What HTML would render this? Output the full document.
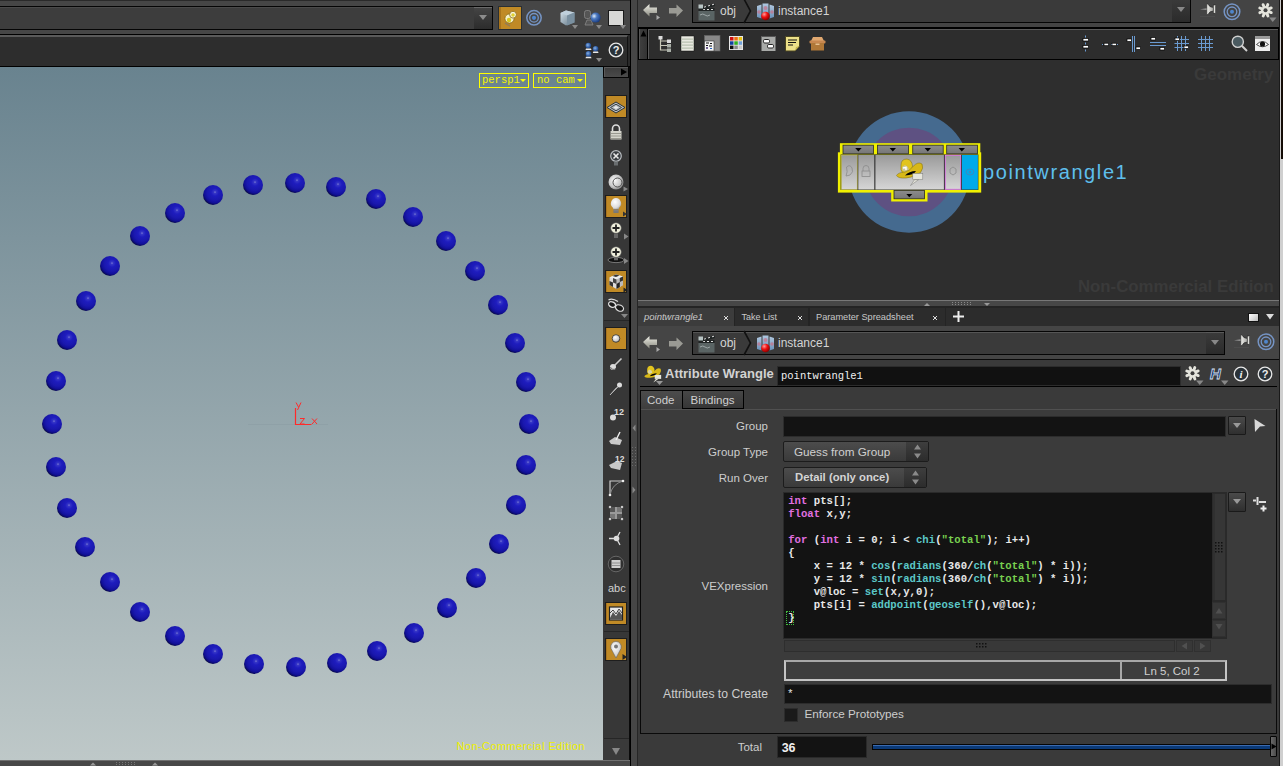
<!DOCTYPE html>
<html><head><meta charset="utf-8">
<style>
*{margin:0;padding:0;box-sizing:border-box}
body{-webkit-font-smoothing:antialiased}
html,body{width:1283px;height:766px;overflow:hidden;background:#3a3a3a;font-family:"Liberation Sans",sans-serif;color:#cfcfcf}
.a{position:absolute}
svg{position:absolute;overflow:visible}
.sp{position:absolute;width:20px;height:20px;border-radius:50%;background:radial-gradient(circle at 60% 36%,#7676d4 0,#3434c6 8%,#1e1cbe 22%,#1a18ae 45%,#12109a 60%,#0a0a66 71%,#030318 79%)}
.mono{font-family:"Liberation Mono",monospace}
.t{position:absolute;white-space:pre;line-height:1}
.tri{position:absolute;width:0;height:0;border-left:3.5px solid transparent;border-right:3.5px solid transparent;border-top:4px solid #8a8a8a}
.ob{position:absolute;left:605px;width:22px;height:23px;background:#c08a26;border:1px solid #1e1e1e;box-shadow:inset 1px 0 0 #a87420}
.lbl{position:absolute;white-space:pre;line-height:1;font-size:11.5px;color:#cdcdcd;text-align:right}
</style></head><body>
<!-- LEFT TOP TOOLBAR -->
<div class="a" style="left:0;top:0;width:630px;height:34px;background:#464646;border-top:1px solid #2a2a2a"></div>
<div class="a" style="left:0;top:6px;width:493px;height:24px;background:#3d3d3d;border:1px solid #050505;border-left:none;box-shadow:inset 0 1px 0 #4a4a4a"></div>
<div class="a" style="left:474px;top:7px;width:18px;height:22px;background:linear-gradient(#444,#2c2c2c);border-top:1px solid #6a6a6a"></div>
<div class="tri" style="left:479px;top:15px;border-left-width:4px;border-right-width:4px;border-top-width:5px;border-top-color:#8c8c8c"></div>
<div class="a" style="left:498px;top:6px;width:24px;height:24px;background:#c08a26;border:1px solid #2a2f33;box-shadow:inset 2px 0 0 #a8741c"></div>
<svg style="left:499px;top:7px" width="22" height="22" viewBox="0 0 22 22">
 <path d="M6 16 L11 19" stroke="#8a7a60" stroke-width="1.5" opacity=".8"/>
 <circle cx="10.5" cy="11.5" r="4.6" fill="#f4f0c8" stroke="#8a6a10" stroke-width=".8"/>
 <circle cx="10" cy="13" r="2.2" fill="#d8c820"/>
 <circle cx="14" cy="7.7" r="3.4" fill="#f8f6e0" stroke="#8a6a10" stroke-width=".8"/>
 <circle cx="14" cy="8" r="1.8" fill="#e0d030"/>
</svg>
<svg style="left:526px;top:10px" width="16" height="16" viewBox="0 0 16 16">
 <circle cx="8" cy="7.8" r="7.2" fill="none" stroke="#7594c4" stroke-width="1.5"/>
 <circle cx="8" cy="7.8" r="4.3" fill="none" stroke="#7594c4" stroke-width="1.3"/>
 <circle cx="8" cy="7.8" r="2.1" fill="#4f86cc"/>
</svg>
<svg style="left:560px;top:10px" width="16" height="16" viewBox="0 0 16 16">
 <defs><linearGradient id="cg" x1="0" y1="0" x2="1" y2="1"><stop offset="0" stop-color="#d8e4ec"/><stop offset="1" stop-color="#5a7080"/></linearGradient></defs>
 <path d="M0.5 3 L6 0.5 L14.5 2.5 L14.5 12.5 L6 15.5 L0.5 12 Z" fill="url(#cg)"/>
 <path d="M0.5 3 L6 0.5 L14.5 2.5 L7 5.5 Z" fill="#c0d0dc"/>
 <path d="M7 5.5 L14.5 2.5 L14.5 12.5 L7 15.5 Z" fill="#7a90a0"/>
</svg>
<div class="tri" style="left:572px;top:25px"></div>
<svg style="left:584px;top:10px" width="18" height="16" viewBox="0 0 18 16">
 <rect x="0.5" y="0.5" width="6" height="8" rx="2" fill="#555" stroke="#888" stroke-width=".8"/>
 <path d="M1 15 L3 10 L7 10 L9 15 Z" fill="#555" stroke="#888" stroke-width=".8"/>
 <defs><radialGradient id="bg1" cx=".35" cy=".35" r=".7"><stop offset="0" stop-color="#e0ecf8"/><stop offset=".4" stop-color="#4d7ac0"/><stop offset="1" stop-color="#173a80"/></radialGradient></defs>
 <circle cx="11.6" cy="7.6" r="5" fill="url(#bg1)"/>
</svg>
<div class="tri" style="left:596px;top:25px"></div>
<div class="a" style="left:608px;top:10px;width:16px;height:16px;background:#d8d8d6;border:1px solid #1a1a1a"></div>
<div class="tri" style="left:620px;top:25px"></div>
<div class="a" style="left:0;top:34px;width:630px;height:1px;background:#000"></div>
<!-- second bar -->
<div class="a" style="left:0;top:35px;width:630px;height:32px;background:#2a2a2a"></div><div class="a" style="left:0;top:35px;width:628px;height:31px;background:#2d2d2d;border-top:2px solid #5a5a5a;border-right:1px solid #111"></div>
<div class="a" style="left:0;top:66px;width:630px;height:1px;background:#000"></div>
<svg style="left:584px;top:42px" width="18" height="18" viewBox="0 0 18 18">
 <defs><radialGradient id="bb" cx=".4" cy=".4" r=".7"><stop offset="0" stop-color="#8ab0e0"/><stop offset=".6" stop-color="#2f5ea8"/><stop offset="1" stop-color="#173870"/></radialGradient></defs>
 <circle cx="4.3" cy="3.6" r="2.8" fill="url(#bb)"/><path d="M2 6.5 H7 L7.5 8 H1.5Z" fill="#e8e8e8"/>
 <circle cx="11.6" cy="6.7" r="2.8" fill="url(#bb)"/><path d="M9.3 9.6 H14 L14.5 11 H8.8Z" fill="#e8e8e8"/>
 <circle cx="4.5" cy="11.9" r="2.8" fill="url(#bb)"/><path d="M2 14.8 H7 L7.5 16.2 H1.5Z" fill="#e8e8e8"/>
</svg>
<div class="tri" style="left:596px;top:58px"></div>
<svg style="left:608px;top:42px" width="16" height="16" viewBox="0 0 16 16">
 <circle cx="8" cy="8" r="6.8" fill="#2a3238" stroke="#e8e8e8" stroke-width="1.3"/>
 <text x="8" y="12" font-family="Liberation Sans" font-weight="bold" font-size="11" fill="#eee" text-anchor="middle">?</text>
</svg>
<!-- VIEWPORT -->
<div class="a" id="vp" style="left:0;top:67px;width:603px;height:693px;background:linear-gradient(#69838f,#bec8c8);overflow:hidden">
<div class="a" style="left:248px;top:357px;width:80px;height:1px;background:#7f9096;opacity:.25"></div>
<svg style="left:290px;top:330px" width="40" height="30" viewBox="0 0 40 30">
 <path d="M5.5 11 V27.5 H21.5" fill="none" stroke="#ff2a2a" stroke-width="1.2"/>
 <path d="M6 5.5 L8.5 10 M11 5.5 L7.5 13" stroke="#ff2a2a" stroke-width="1" fill="none"/>
 <path d="M10 21.5 H14.5 L10 27 H14.5" stroke="#ff2a2a" stroke-width="1" fill="none"/>
 <path d="M22 21.5 L27 27 M27 21.5 L22 27" stroke="#ff2a2a" stroke-width="1" fill="none"/>
</svg>
<i class="sp" style="left:284.8px;top:105.7px"></i>
<i class="sp" style="left:325.8px;top:109.7px"></i>
<i class="sp" style="left:365.5px;top:121.5px"></i>
<i class="sp" style="left:402.6px;top:139.7px"></i>
<i class="sp" style="left:436.2px;top:163.9px"></i>
<i class="sp" style="left:464.6px;top:193.5px"></i>
<i class="sp" style="left:488.0px;top:227.8px"></i>
<i class="sp" style="left:505.0px;top:265.6px"></i>
<i class="sp" style="left:515.7px;top:305.4px"></i>
<i class="sp" style="left:519.3px;top:346.8px"></i>
<i class="sp" style="left:516.1px;top:388.3px"></i>
<i class="sp" style="left:505.9px;top:428.4px"></i>
<i class="sp" style="left:488.9px;top:466.7px"></i>
<i class="sp" style="left:465.9px;top:501.0px"></i>
<i class="sp" style="left:437.3px;top:530.9px"></i>
<i class="sp" style="left:404.1px;top:555.6px"></i>
<i class="sp" style="left:367.1px;top:574.0px"></i>
<i class="sp" style="left:327.0px;top:585.9px"></i>
<i class="sp" style="left:286.0px;top:589.9px"></i>
<i class="sp" style="left:244.3px;top:587.0px"></i>
<i class="sp" style="left:203.4px;top:576.8px"></i>
<i class="sp" style="left:165.3px;top:559.1px"></i>
<i class="sp" style="left:130.4px;top:535.2px"></i>
<i class="sp" style="left:100.0px;top:505.2px"></i>
<i class="sp" style="left:75.4px;top:470.0px"></i>
<i class="sp" style="left:57.4px;top:431.2px"></i>
<i class="sp" style="left:46.1px;top:389.5px"></i>
<i class="sp" style="left:42.2px;top:347.2px"></i>
<i class="sp" style="left:46.1px;top:304.2px"></i>
<i class="sp" style="left:57.4px;top:262.6px"></i>
<i class="sp" style="left:75.7px;top:223.8px"></i>
<i class="sp" style="left:100.0px;top:188.9px"></i>
<i class="sp" style="left:130.0px;top:159.3px"></i>
<i class="sp" style="left:164.6px;top:135.7px"></i>
<i class="sp" style="left:202.7px;top:118.4px"></i>
<i class="sp" style="left:243.2px;top:108.2px"></i>

<div class="a" style="left:479px;top:6px;width:50px;height:15px;border:1px solid #ffff00"></div>
<div class="t mono" style="left:482px;top:8px;font-size:10.5px;color:#f4f400">persp1</div>
<div class="tri" style="left:520px;top:12px;border-top-color:#ffff00;border-left-width:3px;border-right-width:3px;border-top-width:3px"></div>
<div class="a" style="left:533px;top:6px;width:53px;height:15px;border:1px solid #ffff00"></div>
<div class="t mono" style="left:537px;top:8px;font-size:10.5px;color:#f4f400">no cam</div>
<div class="tri" style="left:577px;top:12px;border-top-color:#ffff00;border-left-width:3px;border-right-width:3px;border-top-width:3px"></div>
<div class="t" style="left:456.5px;top:674px;font-size:11px;letter-spacing:.43px;color:#f0f000">Non-Commercial Edition</div>
</div>
<!-- right vertical toolbar -->
<div class="a" style="left:603px;top:67px;width:27px;height:693px;background:#373737;border-right:1px solid #0a0a0a"></div><div class="a" style="left:603px;top:738px;width:26px;height:22px;background:#3a3a3a"></div>
<div class="a" style="left:603px;top:66px;width:26px;height:12px;background:linear-gradient(#3c3c3c,#4a4a4a);border:1px solid #050505;box-shadow:inset 1px 1px 0 #5a5a5a"></div>
<svg style="left:620px;top:68px" width="8" height="8" viewBox="0 0 8 8"><path d="M1 0.5 L7 4 L1 7.5Z" fill="#000"/></svg>
<div class="ob" style="top:95px"></div>
<svg style="left:606px;top:96px" width="20" height="21" viewBox="0 0 20 21">
 <path d="M1 11.5 L10 6 L19 11.5 L10 17Z" fill="#b8bcc0" stroke="#2a343a" stroke-width="1"/>
 <path d="M4.5 11.5 L10 8.2 L15.5 11.5 L10 14.8Z" fill="none" stroke="#3a444a" stroke-width="1"/>
 <path d="M7.5 11.5 L10 10 L12.5 11.5 L10 13Z" fill="#e8ecee"/>
</svg>
<svg style="left:609px;top:124px" width="14" height="17" viewBox="0 0 14 17">
 <path d="M3.5 7 V4.5 A3.5 3.5 0 0 1 10.5 4.5 V7" fill="none" stroke="#ddd" stroke-width="1.6"/>
 <rect x="1.5" y="7" width="11" height="8.5" fill="#d4d4cc"/>
 <path d="M1.5 9.5 H12.5 M1.5 12 H12.5 M1.5 14.5 H12.5" stroke="#8a8a80" stroke-width=".8"/>
</svg>
<svg style="left:609px;top:150px" width="14" height="17" viewBox="0 0 14 17">
 <circle cx="7" cy="6" r="5.3" fill="#3a3e42" stroke="#b8bcc0" stroke-width="1.2"/>
 <path d="M4.5 3.5 L9.5 8.5 M9.5 3.5 L4.5 8.5" stroke="#e8e8e8" stroke-width="1.6"/>
 <rect x="5" y="11.5" width="4" height="4" fill="#6a6e70"/>
</svg>
<svg style="left:608px;top:174px" width="21" height="18" viewBox="0 0 21 18">
 <defs><radialGradient id="wb" cx=".4" cy=".4" r=".7"><stop offset="0" stop-color="#fafafa"/><stop offset=".6" stop-color="#c8c8c8"/><stop offset="1" stop-color="#707070"/></radialGradient></defs>
 <circle cx="8" cy="8" r="7.5" fill="url(#wb)"/>
 <circle cx="9.5" cy="8.5" r="4.5" fill="none" stroke="#555" stroke-width="1"/>
 <path d="M15.5 12.5 L20 15 L15.5 17.5Z" fill="#888"/>
</svg>
<div class="ob" style="top:195px"></div>
<svg style="left:608px;top:197px" width="20" height="20" viewBox="0 0 20 20">
 <defs><radialGradient id="wb2" cx=".4" cy=".35" r=".7"><stop offset="0" stop-color="#fff"/><stop offset=".7" stop-color="#dcdcdc"/><stop offset="1" stop-color="#9a9a9a"/></radialGradient></defs>
 <path d="M8 1 A5.5 5.5 0 0 1 11.3 10.6 L10.5 12.5 H5.5 L4.7 10.6 A5.5 5.5 0 0 1 8 1Z" fill="url(#wb2)"/>
 <rect x="5.5" y="12.5" width="5" height="3.5" fill="#6a6a6a"/>
 <path d="M5.5 13.7 H10.5 M5.5 15 H10.5" stroke="#999" stroke-width=".6"/>
 <path d="M15 14.5 L19 17 L15 19.5Z" fill="#333"/>
</svg>
<svg style="left:608px;top:222px" width="21" height="19" viewBox="0 0 21 19">
 <circle cx="8" cy="6" r="5.3" fill="#efefdc" stroke="#555" stroke-width=".6"/>
 <path d="M8 2.5 V9.5 M4.5 6 H11.5" stroke="#222" stroke-width="1.8"/>
 <rect x="6" y="11.5" width="4" height="4.5" fill="#666"/>
 <path d="M16 11.5 L20.5 14.5 L16 17.5Z" fill="#888"/>
</svg>
<svg style="left:607px;top:246px" width="22" height="20" viewBox="0 0 22 20">
 <ellipse cx="9" cy="14" rx="8" ry="2.6" fill="#111" stroke="#aaa" stroke-width=".6"/>
 <circle cx="9" cy="6" r="5.3" fill="#efefdc" stroke="#555" stroke-width=".6"/>
 <path d="M9 2.5 V9.5 M5.5 6 H12.5" stroke="#222" stroke-width="1.8"/>
 <rect x="7" y="11.3" width="4" height="3" fill="#666"/>
 <path d="M17 12 L21.5 15 L17 18Z" fill="#888"/>
</svg>
<div class="ob" style="top:270px"></div>
<svg style="left:608px;top:273px" width="20" height="20" viewBox="0 0 20 20">
 <path d="M1.5 4.5 L8 1.5 L15 3.5 L15 12 L8.5 16 L1.5 12Z" fill="#ddd"/>
 <path d="M1.5 4.5 L8 1.5 L15 3.5 L8.5 6.5Z" fill="#eee"/>
 <path d="M4.5 3 L8 1.5 L11.5 2.5 L8 4Z" fill="#333"/>
 <path d="M8.5 6.5 L15 3.5 L15 12 L8.5 16Z" fill="#bbb"/>
 <path d="M8.5 11 L11.8 9 L11.8 14 L8.5 16Z" fill="#222"/><path d="M11.8 5 L15 3.5 L15 7.5 L11.8 9Z" fill="#333"/>
 <path d="M1.5 8 L5 9.5 L5 14 L1.5 12Z" fill="#333"/><path d="M5 5 L8.5 6.5 L8.5 11 L5 9.5Z" fill="#444"/>
 <path d="M15.5 14.5 L19.5 17 L15.5 19.5Z" fill="#222"/>
</svg>
<svg style="left:607px;top:297px" width="22" height="21" viewBox="0 0 22 21">
 <path d="M1.5 3 Q5 0.5 11 4.5" stroke="#ddd" stroke-width="1.3" fill="none"/>
 <ellipse cx="5" cy="7.5" rx="3.6" ry="2.6" transform="rotate(25 5 7.5)" fill="#1a1a1a" stroke="#e0e0e0" stroke-width="1.2"/>
 <ellipse cx="12.5" cy="11" rx="4.2" ry="3" transform="rotate(25 12.5 11)" fill="#1a1a1a" stroke="#e0e0e0" stroke-width="1.2"/>
 <path d="M14 17 L21 17 L17.5 21Z" fill="#888"/>
</svg>
<div class="a" style="left:604px;top:320px;width:25px;height:1px;background:#262626"></div>
<div class="ob" style="top:327px"></div>
<svg style="left:606px;top:328px" width="20" height="21" viewBox="0 0 20 21">
 <defs><radialGradient id="wd" cx=".4" cy=".35" r=".7"><stop offset="0" stop-color="#fff"/><stop offset=".7" stop-color="#ccc"/><stop offset="1" stop-color="#777"/></radialGradient></defs>
 <circle cx="10" cy="10.5" r="3.8" fill="url(#wd)" stroke="#333" stroke-width=".8"/>
</svg>
<svg style="left:609px;top:357px" width="14" height="14" viewBox="0 0 14 14">
 <path d="M5 9 L12.5 1.5" stroke="#ccc" stroke-width="1.6"/>
 <circle cx="4" cy="10" r="3" fill="#ddd"/>
 <path d="M1.5 10 A3 3 0 0 0 7 11" fill="none" stroke="#666" stroke-width="1"/>
</svg>
<svg style="left:609px;top:382px" width="14" height="14" viewBox="0 0 14 14">
 <circle cx="10.5" cy="3" r="2.5" fill="#ddd"/>
 <path d="M9 5 L1 13 L7.5 5.5" fill="#bbb" stroke="#bbb" stroke-width=".8"/>
</svg>
<svg style="left:608px;top:406px" width="20" height="16" viewBox="0 0 20 16">
 <circle cx="5" cy="11.5" r="3" fill="#ddd"/>
 <text x="6" y="8.5" font-family="Liberation Sans" font-weight="bold" font-size="9" fill="#ddd">12</text>
</svg>
<svg style="left:608px;top:430px" width="16" height="16" viewBox="0 0 16 16">
 <path d="M1 11 L7 7 L14 10 L12 15 L3 14Z" fill="#c8c8c8"/>
 <path d="M8 10 L12 2" stroke="#eee" stroke-width="1.4"/>
</svg>
<svg style="left:608px;top:455px" width="20" height="16" viewBox="0 0 20 16">
 <path d="M1 10 L9 6 L14 8 L12 15 L3 13Z" fill="#c8c8c8"/>
 <text x="7" y="7" font-family="Liberation Sans" font-weight="bold" font-size="8.5" fill="#ddd">12</text>
</svg>
<svg style="left:608px;top:479px" width="17" height="18" viewBox="0 0 17 18">
 <path d="M2 16 V2 H15" fill="none" stroke="#ccc" stroke-width="1.2"/>
 <path d="M2 16 Q4 5 15 2" fill="none" stroke="#888" stroke-width="1"/>
 <circle cx="2" cy="16" r="1.3" fill="#eee"/><circle cx="15" cy="2" r="1.3" fill="#eee"/>
</svg>
<svg style="left:608px;top:505px" width="16" height="16" viewBox="0 0 16 16">
 <rect x="2" y="2" width="12" height="12" fill="#777"/>
 <rect x="2" y="2" width="6" height="6" fill="#555"/><rect x="8" y="8" width="6" height="6" fill="#555"/>
 <rect x="7" y="2" width="2" height="12" fill="#999"/><rect x="2" y="7" width="12" height="2" fill="#999"/>
 <g fill="#eee" stroke="#222" stroke-width=".6"><circle cx="2" cy="2" r="1.5"/><circle cx="14" cy="2" r="1.5"/><circle cx="2" cy="14" r="1.5"/><circle cx="14" cy="14" r="1.5"/></g>
</svg>
<svg style="left:608px;top:530px" width="16" height="17" viewBox="0 0 16 17">
 <path d="M8.5 8.5 L1 8.5 M8.5 8.5 L12 2 M8.5 8.5 L12 15" stroke="#ddd" stroke-width="1.3"/>
 <circle cx="8.5" cy="8.5" r="2.8" fill="#ddd"/>
</svg>
<svg style="left:607px;top:555px" width="18" height="18" viewBox="0 0 18 18">
 <circle cx="9" cy="9" r="7.8" fill="#303030" stroke="#666" stroke-width="1"/>
 <rect x="4.5" y="5" width="9" height="8" fill="#d0d0d0"/>
 <path d="M4.5 8 H13.5 M4.5 10.5 H13.5" stroke="#777" stroke-width=".7"/>
</svg>
<div class="t" style="left:608px;top:583px;font-size:11px;color:#d0d0d0">abc</div>
<div class="ob" style="top:602px"></div>
<svg style="left:606px;top:603px" width="20" height="21" viewBox="0 0 20 21">
 <rect x="3.5" y="4" width="13" height="13" fill="#e8e8e8" stroke="#222" stroke-width="1.2"/>
 <path d="M4 15 L7 9 L10 13 L13 8 L16 12 L16 16.5 L4 16.5Z" fill="#555"/>
 <path d="M4 10 L7 7 L10 11 L13 6 L16 10" fill="none" stroke="#444" stroke-width="1"/>
</svg>
<div class="a" style="left:604px;top:631px;width:25px;height:1px;background:#262626"></div>
<div class="ob" style="top:638px"></div>
<svg style="left:606px;top:639px" width="22" height="22" viewBox="0 0 22 22">
 <defs><radialGradient id="pn" cx=".4" cy=".35" r=".7"><stop offset="0" stop-color="#fff"/><stop offset=".8" stop-color="#ccc"/><stop offset="1" stop-color="#999"/></radialGradient></defs>
 <path d="M10 19 L5 9.5 A5.3 5.3 0 1 1 15 9.5Z" fill="url(#pn)" stroke="#666" stroke-width=".6"/>
 <circle cx="10" cy="7.5" r="2" fill="#777"/>
 <path d="M16.5 15 L21 18 L16.5 21Z" fill="#222"/>
</svg>
<div class="a" style="left:604px;top:738px;width:25px;height:1px;background:#262626"></div>
<svg style="left:611px;top:747px" width="10" height="9" viewBox="0 0 10 9"><path d="M1 1 H9 L5 8Z" fill="#888"/></svg>

<!-- bottom strip -->
<div class="a" style="left:0;top:760px;width:630px;height:6px;background:#484848;border-top:1px solid #707070"></div>
<svg style="left:88px;top:761px" width="80" height="5" viewBox="0 0 80 5">
 <path d="M2 4.5 L5 1.5 L8 4.5Z" fill="#999"/><path d="M64 4.5 L67 1.5 L70 4.5Z" fill="#999"/>
 <g fill="#777"><rect x="28" y="1" width="1" height="1"/><rect x="31" y="1" width="1" height="1"/><rect x="34" y="1" width="1" height="1"/><rect x="37" y="1" width="1" height="1"/><rect x="40" y="1" width="1" height="1"/><rect x="43" y="1" width="1" height="1"/><rect x="46" y="1" width="1" height="1"/>
 <rect x="28" y="3" width="1" height="1"/><rect x="31" y="3" width="1" height="1"/><rect x="34" y="3" width="1" height="1"/><rect x="37" y="3" width="1" height="1"/><rect x="40" y="3" width="1" height="1"/><rect x="43" y="3" width="1" height="1"/><rect x="46" y="3" width="1" height="1"/></g>
</svg>
<!-- separator -->
<div class="a" style="left:630px;top:0;width:1px;height:766px;background:#000"></div>
<div class="a" style="left:631px;top:0;width:6px;height:766px;background:#464646"></div>
<div class="a" style="left:637px;top:0;width:1px;height:766px;background:#262626"></div>
<svg style="left:631px;top:420px" width="6" height="76" viewBox="0 0 6 76">
 <path d="M4.5 4.5 L1.5 8 L4.5 11.5Z" fill="#888"/>
 <g fill="#6a6a6a"><rect x="1" y="27" width="1" height="1"/><rect x="4" y="27" width="1" height="1"/><rect x="1" y="30" width="1" height="1"/><rect x="4" y="30" width="1" height="1"/><rect x="1" y="33" width="1" height="1"/><rect x="4" y="33" width="1" height="1"/><rect x="1" y="36" width="1" height="1"/><rect x="4" y="36" width="1" height="1"/><rect x="1" y="39" width="1" height="1"/><rect x="4" y="39" width="1" height="1"/><rect x="1" y="42" width="1" height="1"/><rect x="4" y="42" width="1" height="1"/><rect x="1" y="45" width="1" height="1"/><rect x="4" y="45" width="1" height="1"/></g>
 <path d="M1.5 66.5 L4.5 70 L1.5 73.5Z" fill="#888"/>
</svg>

<!-- RIGHT PANEL TOP -->
<div class="a" style="left:638px;top:0;width:642px;height:27px;background:#444"></div>
<svg style="left:642px;top:3px" width="20" height="17" viewBox="0 0 20 17">
 <defs><linearGradient id="ar" x1="0" y1="0" x2="0" y2="1"><stop offset="0" stop-color="#f0f0e8"/><stop offset="1" stop-color="#8a8a80"/></linearGradient></defs>
 <path d="M1 7 L7.5 1 V4.5 H15 V10 H7.5 V13.5Z" fill="url(#ar)"/>
 <path d="M14.5 12 L18 14.5 L14.5 17Z" fill="#aaa"/>
</svg>
<svg style="left:668px;top:4px" width="16" height="15" viewBox="0 0 16 15">
 <path d="M15 6.5 L8.5 0.5 V4 H1 V9.5 H8.5 V13Z" fill="#9a9a94"/>
</svg>
<div class="a" style="left:692px;top:-2px;width:499px;height:25px;background:#3a3a3a;border:1px solid #050505;box-shadow:inset 0 1px 0 #555"></div>
<div class="a" style="left:1172px;top:-1px;width:18px;height:23px;background:linear-gradient(#3a3a3a,#2b2b2b);border-top:1px solid #5a5a5a"></div>
<div class="tri" style="left:1177px;top:7px;border-top-color:#888;border-left-width:4px;border-right-width:4px;border-top-width:5px"></div>
<svg style="left:697px;top:2px" width="20" height="20" viewBox="0 0 20 20">
 <rect x="1.5" y="9" width="16" height="9.5" fill="#5a6464"/>
 <path d="M3 13 Q6 11 8 13 T13 13" stroke="#c8d0d0" stroke-width="1" fill="none" opacity=".6"/>
 <rect x="1.5" y="6" width="16" height="3" fill="#202424"/>
 <path d="M6 7.5 H8 M10 7.5 H12 M14 7.5 H16" stroke="#e0e0e0" stroke-width="1"/>
 <path d="M5 5.5 L17.5 1.5 L18 4 L5.5 7.5Z" fill="#202424"/>
 <path d="M7 5.2 L9 4.6 M11 4 L13 3.4 M15 2.8 L17 2.2" stroke="#e0e0e0" stroke-width="1"/>
 <rect x="1.5" y="2.5" width="4.5" height="4" fill="#b8c4c4"/>
</svg>
<div class="t" style="left:720px;top:5px;font-size:12px;color:#d4d4d4">obj</div>
<svg style="left:743px;top:-1px" width="12" height="24" viewBox="0 0 12 24"><path d="M1 0 L7.5 12 L1 24" fill="none" stroke="#111" stroke-width="1.6"/></svg>
<svg style="left:756px;top:3px" width="19" height="19" viewBox="0 0 19 19">
 <defs><radialGradient id="rd" cx=".35" cy=".3" r=".7"><stop offset="0" stop-color="#ff9a9a"/><stop offset=".5" stop-color="#ee1010"/><stop offset="1" stop-color="#900000"/></radialGradient><linearGradient id="ipg" x1="0" y1="0" x2="0" y2="1"><stop offset="0" stop-color="#b0c8e0"/><stop offset="1" stop-color="#6a90b8"/></linearGradient></defs>
 <path d="M1 3 L5.5 1.5 L5.5 15.5 L1 14Z" fill="url(#ipg)"/>
 <path d="M6.5 0.5 H12.5 V14.5 H6.5Z" fill="url(#ipg)"/>
 <path d="M13.5 1.5 L18 3 L18 14 L13.5 15.5Z" fill="url(#ipg)"/>
 <circle cx="3" cy="9" r="1.8" fill="#c87088" opacity=".7"/><circle cx="9.5" cy="5" r="2" fill="#c87088" opacity=".7"/><circle cx="16" cy="9" r="1.8" fill="#c87088" opacity=".7"/>
 <circle cx="9.5" cy="13" r="4.3" fill="url(#rd)"/>
</svg>
<div class="t" style="left:778px;top:5px;font-size:12px;color:#d4d4d4">instance1</div>
<svg style="left:1199px;top:3px" width="18" height="16" viewBox="0 0 18 16">
 <defs><linearGradient id="png" x1="0" y1="0" x2="1" y2="0"><stop offset="0" stop-color="#f0f0ec"/><stop offset="1" stop-color="#a8a8a4"/></linearGradient></defs>
 <path d="M1 6.2 L8 5.3 L8 7.1Z" fill="#9a9a9a"/>
 <path d="M7.8 0.8 L9.2 1.2 Q10.5 4.5 14.3 4.5 V8 Q10.5 8 9.2 11.3 L7.8 11.7Z" fill="url(#png)" stroke="#1a1a1a" stroke-width=".5"/>
 <rect x="14.3" y="2" width="2.4" height="8.2" fill="#e0e0dc" stroke="#1a1a1a" stroke-width=".5"/>
 <path d="M1 13.5 H16" stroke="#555" stroke-width="1" opacity=".5"/>
</svg>
<svg style="left:1223px;top:2.5px" width="18" height="18" viewBox="0 0 18 18">
 <circle cx="9" cy="8.8" r="7.8" fill="none" stroke="#7594c4" stroke-width="1.5"/>
 <circle cx="9" cy="8.8" r="4.8" fill="none" stroke="#7594c4" stroke-width="1.3"/>
 <circle cx="9" cy="8.8" r="2" fill="#4f86cc"/>
</svg>
<svg style="left:1257px;top:2px" width="20" height="21" viewBox="0 0 20 21">
 <g transform="translate(8.5,8.3)" fill="#e4e4dc"><circle r="4.4"/><rect x="-1.45" y="-7.6" width="2.9" height="4.6" rx="1.45" transform="rotate(22)"/><rect x="-1.45" y="-7.6" width="2.9" height="4.6" rx="1.45" transform="rotate(67)"/><rect x="-1.45" y="-7.6" width="2.9" height="4.6" rx="1.45" transform="rotate(112)"/><rect x="-1.45" y="-7.6" width="2.9" height="4.6" rx="1.45" transform="rotate(157)"/><rect x="-1.45" y="-7.6" width="2.9" height="4.6" rx="1.45" transform="rotate(202)"/><rect x="-1.45" y="-7.6" width="2.9" height="4.6" rx="1.45" transform="rotate(247)"/><rect x="-1.45" y="-7.6" width="2.9" height="4.6" rx="1.45" transform="rotate(292)"/><rect x="-1.45" y="-7.6" width="2.9" height="4.6" rx="1.45" transform="rotate(337)"/><circle r="2" fill="#444"/></g>
 <path d="M12 15.5 H19.5 L15.75 20Z" fill="#888"/>
</svg>
<!-- network toolbar -->
<div class="a" style="left:638px;top:27px;width:642px;height:33px;background:#000"></div>
<div class="a" style="left:639px;top:29px;width:8px;height:30px;background:linear-gradient(90deg,#555 0,#555 1px,#3e3e3e 1px,#333)"></div>
<svg style="left:640px;top:30px" width="7" height="7" viewBox="0 0 7 7"><path d="M0.5 6.5 L3.5 0.5 L6.5 6.5Z" fill="#000"/></svg>
<div class="a" style="left:648px;top:29px;width:630px;height:30px;background:#2d2d2d;border-top:1px solid #5a5a5a;border-left:1px solid #5a5a5a"></div>
<svg style="left:658px;top:36px" width="14" height="16" viewBox="0 0 14 16">
 <path d="M2.5 2 V14.5 M2.5 5 H10 M2.5 9.5 H10 M2.5 14 H10" stroke="#c8c8b8" stroke-width="1.2" fill="none"/>
 <rect x="0.5" y="0" width="4" height="3.5" fill="#ddd"/>
 <rect x="9" y="3.5" width="4" height="3.5" fill="#ddd"/><rect x="9" y="8" width="4" height="3.5" fill="#aab0a8"/><rect x="9" y="12.5" width="4" height="3.5" fill="#aab0a8"/>
</svg>
<svg style="left:681px;top:36px" width="14" height="16" viewBox="0 0 14 16">
 <rect x="0" y="0" width="13" height="15" fill="#e8e8e0" stroke="#111" stroke-width=".5"/>
 <path d="M0 3.2 H13 M0 6.2 H13 M0 9.2 H13 M0 12.2 H13" stroke="#b8c0b0" stroke-width="1.3"/>
</svg>
<svg style="left:704px;top:35px" width="17" height="17" viewBox="0 0 17 17">
 <rect x="0.5" y="0.5" width="15.5" height="15.5" fill="#888" stroke="#666" stroke-width=".6"/>
 <rect x="0.5" y="6" width="9.5" height="10" fill="#f4f4f4" stroke="#333" stroke-width=".6"/>
 <path d="M2 8 H5 M6 8.5 H8 M2 10.5 H4 M5 11 H8 M2 13 H4 M6 13.5 H8" stroke="#111" stroke-width="1"/>
 <path d="M2 13 H4" stroke="#6040a0" stroke-width="1"/><path d="M6 13.5 H8" stroke="#2060c0" stroke-width="1"/>
</svg>
<svg style="left:729px;top:36px" width="15" height="15" viewBox="0 0 15 15">
 <rect x="0" y="0" width="14" height="14" fill="#e8e8e8"/>
 <rect x="1" y="1" width="3.5" height="3.5" fill="#d01010"/><rect x="5.3" y="1" width="3.5" height="3.5" fill="#f07010"/><rect x="9.6" y="1" width="3.5" height="3.5" fill="#e8c010"/>
 <rect x="1" y="5.3" width="3.5" height="3.5" fill="#1040a0"/><rect x="5.3" y="5.3" width="3.5" height="3.5" fill="#30b020"/><rect x="9.6" y="5.3" width="3.5" height="3.5" fill="#70a0d8"/>
 <rect x="1" y="9.6" width="3.5" height="3.5" fill="#111"/><rect x="5.3" y="9.6" width="3.5" height="3.5" fill="#888"/><rect x="9.6" y="9.6" width="3.5" height="3.5" fill="#c8c8c8"/>
</svg>
<svg style="left:761px;top:36px" width="16" height="15" viewBox="0 0 16 15">
 <rect x="0.5" y="0" width="14" height="15" fill="#a8aaa8"/>
 <path d="M0.5 0.5 H14.5" stroke="#555" stroke-width="1"/>
 <rect x="2.5" y="3.5" width="6" height="3.5" rx="1.2" fill="#fff" stroke="#222" stroke-width="1"/>
 <rect x="6.5" y="8.5" width="6" height="3.5" rx="1.2" fill="#fff" stroke="#222" stroke-width="1"/>
</svg>
<svg style="left:785px;top:36px" width="16" height="16" viewBox="0 0 16 16">
 <path d="M0.5 0.5 H14.5 V10 L10 15 H0.5Z" fill="#ece088" stroke="#4a4420" stroke-width="1"/>
 <path d="M3 4 H12 M3 6.5 H11 M3 9 H8" stroke="#111" stroke-width="1.2"/>
 <path d="M14.5 10 L10 15 L11 11Z" fill="#c8b850"/>
</svg>
<svg style="left:809px;top:36px" width="17" height="15" viewBox="0 0 17 15">
 <path d="M2 5 L4 1 H13 L15 5Z" fill="#e0a870"/>
 <rect x="0.5" y="4.5" width="16" height="3" rx="1" fill="#c88850"/>
 <rect x="2" y="7" width="13" height="7.5" fill="#b07838"/>
 <rect x="6.5" y="7.5" width="4" height="1.5" fill="#e8c090"/>
</svg>
<svg style="left:1080px;top:35px" width="140" height="18" viewBox="0 0 140 18">
 <g stroke="#6a9ad0" stroke-width="1">
  <path d="M5.5 0.5 V17" stroke-dasharray="2 1.5"/>
  <path d="M22 9.5 H38" stroke-dasharray="1 2"/>
  <path d="M52.5 1 V17 M54.5 1 V17"/>
  <path d="M70 7.5 H86 M70 10.5 H86"/>
  <path d="M94.5 4.5 H109 M94.5 8.5 H109 M94.5 12.5 H109 M97.5 1 V16 M101.5 1 V16 M105.5 1 V16"/>
  <path d="M118 4.5 H133 M118 8.5 H133 M118 12.5 H133 M121.5 1 V16 M125.5 1 V16 M129.5 1 V16"/>
 </g>
 <g fill="#fff" stroke="#000" stroke-width=".7">
  <rect x="3" y="3.5" width="5.5" height="2.5"/><rect x="3" y="10.5" width="5.5" height="2.5"/>
  <rect x="24" y="8.2" width="4.5" height="2.5"/><rect x="32" y="8.2" width="4.5" height="2.5"/>
  <rect x="47" y="4" width="4.5" height="2.5"/><rect x="56" y="12" width="4.5" height="2.5"/>
  <rect x="71" y="2.5" width="4.5" height="2.5"/><rect x="80" y="12.5" width="4.5" height="2.5"/>
  <rect x="95" y="3" width="4.5" height="2.5"/><rect x="104" y="11" width="4.5" height="2.5"/>
 </g>
</svg>
<svg style="left:1231px;top:35px" width="18" height="18" viewBox="0 0 18 18">
 <circle cx="6.8" cy="6.8" r="5.6" fill="#4a5a60" stroke="#d0d0d0" stroke-width="1.4"/>
 <path d="M10.8 10.8 L16 16" stroke="#d0d0d0" stroke-width="2"/>
</svg>
<svg style="left:1255px;top:36px" width="16" height="16" viewBox="0 0 16 16">
 <rect x="0" y="0" width="15" height="15" fill="#eee"/>
 <rect x="0" y="0" width="15" height="3" fill="#999"/>
 <path d="M1.5 8.5 Q7.5 2.5 13.5 8.5 Q7.5 13 1.5 8.5Z" fill="#fff" stroke="#222" stroke-width=".8"/>
 <circle cx="7.5" cy="8" r="2.6" fill="#111"/>
</svg>

<!-- network -->
<div class="a" style="left:638px;top:60px;width:641px;height:240px;background:#2e2e2e;overflow:hidden">
 <div class="t" style="left:556px;top:6px;font-size:17px;font-weight:bold;color:#3a3a3a">Geometry</div>
 <div class="t" style="left:440px;top:219px;font-size:16.8px;font-weight:bold;color:#3a3a3a">Non-Commercial Edition</div>
 <svg style="left:192px;top:40px" width="160" height="140" viewBox="0 0 160 140">
 <defs>
  <linearGradient id="nb" x1="0" y1="0" x2="0" y2="1"><stop offset="0" stop-color="#9a9a9a"/><stop offset="1" stop-color="#d6d6d6"/></linearGradient>
  <linearGradient id="nt" x1="0" y1="0" x2="0" y2="1"><stop offset="0" stop-color="#8c8c8c"/><stop offset="1" stop-color="#767676"/></linearGradient>
 </defs>
 <circle cx="79" cy="72" r="60.7" fill="#456a8f"/>
 <circle cx="79" cy="72" r="44.3" fill="#5e5182"/>
 <rect x="9.9" y="43.2" width="140.4" height="11" fill="#f0f000"/>
 <rect x="7.9" y="52.3" width="143.3" height="40.3" fill="#f0f000"/>
 <rect x="61.2" y="90" width="36.3" height="11.5" fill="#f0f000"/>
 <g fill="url(#nt)" stroke="#2a2a2a" stroke-width=".8">
  <rect x="13" y="45.2" width="30.4" height="8.6"/>
  <rect x="47.4" y="45.2" width="31" height="8.6"/>
  <rect x="82.75" y="45.2" width="30.45" height="8.6"/>
  <rect x="116.7" y="45.2" width="30.8" height="8.6"/>
  <rect x="64" y="90.5" width="30.5" height="8.3"/>
 </g>
 <g fill="#000">
  <path d="M25.2 48 H31.6 L28.4 51.5Z"/><path d="M59.6 48 H66 L62.8 51.5Z"/><path d="M94.6 48 H101 L97.8 51.5Z"/><path d="M128.6 48 H135 L131.8 51.5Z"/>
  <path d="M76.3 94 H82.3 L79.3 97.3Z"/>
 </g>
 <rect x="10.6" y="54.4" width="137.8" height="35.5" fill="#2a2a2a"/>
 <rect x="11.3" y="55" width="15.9" height="34.5" fill="url(#nb)" stroke="#c8c040" stroke-width=".6"/>
 <rect x="28.3" y="55" width="16" height="34.5" fill="url(#nb)"/>
 <rect x="45.4" y="55" width="68.5" height="34.5" fill="url(#nb)"/>
 <rect x="115.3" y="55.3" width="15.4" height="34" fill="url(#nb)" stroke="#e080e8" stroke-width="1"/>
 <rect x="132" y="55" width="15.9" height="34.5" fill="#00aaea"/>
 <path d="M16.5 67 Q20 64 22 68 Q24 72 20 75 L16 76 Q18 72 16.5 67Z" fill="none" stroke="#8a8a8a" stroke-width=".8"/>
 <path d="M33 71 V68.5 A3 3 0 0 1 39 68.5 V71" fill="none" stroke="#8a8a8a" stroke-width=".8"/><rect x="32" y="71" width="8" height="5.5" fill="none" stroke="#8a8a8a" stroke-width=".8"/>
 <path d="M120 69 L123 67 L126 69 L126 73 L123 75 L120 73Z" fill="none" stroke="#8a8a8a" stroke-width=".8"/>
 <ellipse cx="140" cy="72" rx="4" ry="3" fill="none" stroke="#3a8ac0" stroke-width="1"/><circle cx="140" cy="72" r="1.3" fill="#3a8ac0"/>
 <g transform="translate(66,58)">
  <path d="M5 7 Q5 1 11 1 Q16 2 16.5 8 L15.5 13 L7 15.5 Q4 12 5 7Z" fill="#e2c41e" stroke="#7a6a10" stroke-width=".5"/>
  <path d="M6 9 L9 7 L12 9 L13 12 L9 14 L6 12Z" fill="#c8c8b0" opacity=".8"/>
  <path d="M7 10 L10 9.5 L10 12" fill="none" stroke="#fff" stroke-width="1.5"/>
  <path d="M0.5 17.5 Q2 14.5 9 14 Q14 12.5 17 8.5 Q22 3 26 6 Q28 10 24.5 14.5 Q18 19.5 10 20 Q2 20.5 0.5 17.5Z" fill="#d8b818" stroke="#7a6a10" stroke-width=".5"/>
  <path d="M9 17.5 Q13 13 20 13 Q18 17 9 17.5Z" fill="#000"/>
  <rect x="16.8" y="15.5" width="10" height="6.2" fill="#e6e6dc" stroke="#777" stroke-width=".5"/>
  <path d="M18.5 21.7 L14.5 27.5 L22.5 21.7Z" fill="#e6e6dc" stroke="#777" stroke-width=".5"/>
 </g>
</svg>
<div class="t" style="left:345px;top:101.8px;font-size:20px;letter-spacing:1.6px;color:#5ebfec">pointwrangle1</div>

</div>
<!-- separator h -->
<div class="a" style="left:638px;top:300px;width:641px;height:1px;background:#777"></div>
<div class="a" style="left:638px;top:301px;width:641px;height:5px;background:#474747"></div>
<svg style="left:923px;top:301px" width="80" height="6" viewBox="0 0 80 6">
 <path d="M1 5 L4 2 L7 5Z" fill="#999"/><path d="M61 2 L67 2 L64 5Z" fill="#999"/>
 <g fill="#888"><rect x="29" y="1" width="1" height="1"/><rect x="32" y="1" width="1" height="1"/><rect x="35" y="1" width="1" height="1"/><rect x="38" y="1" width="1" height="1"/><rect x="41" y="1" width="1" height="1"/><rect x="44" y="1" width="1" height="1"/><rect x="47" y="1" width="1" height="1"/>
 <rect x="29" y="3" width="1" height="1"/><rect x="32" y="3" width="1" height="1"/><rect x="35" y="3" width="1" height="1"/><rect x="38" y="3" width="1" height="1"/><rect x="41" y="3" width="1" height="1"/><rect x="44" y="3" width="1" height="1"/><rect x="47" y="3" width="1" height="1"/></g>
</svg>
<!-- tabbar -->
<div class="a" style="left:638px;top:306px;width:641px;height:20px;background:#242424"></div>
<div class="a" style="left:638px;top:307.5px;width:96px;height:18.5px;background:#3c3c3c"></div>
<div class="a" style="left:735px;top:307.5px;width:73px;height:18px;background:#2c2c2c"></div>
<div class="a" style="left:810px;top:307.5px;width:135px;height:18px;background:#2c2c2c"></div>
<div class="a" style="left:946px;top:307.5px;width:333px;height:18px;background:#2c2c2c"></div>
<div class="t" style="left:644px;top:312.3px;font-size:9.5px;font-style:italic;color:#c8c8c8">pointwrangle1</div>
<div class="t" style="left:741.5px;top:313px;font-size:9px;color:#c8c8c8">Take List</div>
<div class="t" style="left:816px;top:313px;font-size:9.2px;color:#c8c8c8">Parameter Spreadsheet</div>
<svg style="left:722px;top:314px" width="8" height="8" viewBox="0 0 8 8"><path d="M2 2 L6 6 M6 2 L2 6" stroke="#ddd" stroke-width="1"/></svg>
<svg style="left:796px;top:314px" width="8" height="8" viewBox="0 0 8 8"><path d="M2 2 L6 6 M6 2 L2 6" stroke="#ddd" stroke-width="1"/></svg>
<svg style="left:931px;top:314px" width="8" height="8" viewBox="0 0 8 8"><path d="M2 2 L6 6 M6 2 L2 6" stroke="#ddd" stroke-width="1"/></svg>
<svg style="left:952px;top:310px" width="13" height="13" viewBox="0 0 13 13"><path d="M6.5 1 V12 M1 6.5 H12" stroke="#eee" stroke-width="2"/></svg>
<div class="a" style="left:1248px;top:313px;width:11px;height:9px;background:linear-gradient(135deg,#fff,#bbb);border:1px solid #111"></div>
<svg style="left:1265px;top:313px" width="10" height="8" viewBox="0 0 10 8"><path d="M1 1 H9 L5 6.5Z" fill="#ddd"/></svg>
<!-- path bar 2 -->
<div class="a" style="left:638px;top:326px;width:641px;height:33px;background:#454545"></div>
<svg style="left:642px;top:335px" width="20" height="17" viewBox="0 0 20 17">
 <path d="M1 7 L7.5 1 V4.5 H15 V10 H7.5 V13.5Z" fill="url(#ar)"/>
 <path d="M14.5 12 L18 14.5 L14.5 17Z" fill="#aaa"/>
</svg>
<svg style="left:668px;top:337px" width="16" height="15" viewBox="0 0 16 15"><path d="M15 6.5 L8.5 0.5 V4 H1 V9.5 H8.5 V13Z" fill="#9a9a94"/></svg>
<div class="a" style="left:692px;top:331px;width:533px;height:24px;background:#3a3a3a;border:1px solid #050505;box-shadow:inset 0 1px 0 #555"></div>
<div class="a" style="left:1206px;top:332px;width:18px;height:22px;background:linear-gradient(#3a3a3a,#2b2b2b);border-top:1px solid #5a5a5a"></div>
<div class="tri" style="left:1211px;top:340px;border-top-color:#888;border-left-width:4px;border-right-width:4px;border-top-width:5px"></div>
<svg style="left:697px;top:334px" width="20" height="20" viewBox="0 0 20 20">
 <rect x="1.5" y="9" width="16" height="9.5" fill="#5a6464"/>
 <path d="M3 13 Q6 11 8 13 T13 13" stroke="#c8d0d0" stroke-width="1" fill="none" opacity=".6"/>
 <rect x="1.5" y="6" width="16" height="3" fill="#202424"/>
 <path d="M6 7.5 H8 M10 7.5 H12 M14 7.5 H16" stroke="#e0e0e0" stroke-width="1"/>
 <path d="M5 5.5 L17.5 1.5 L18 4 L5.5 7.5Z" fill="#202424"/>
 <path d="M7 5.2 L9 4.6 M11 4 L13 3.4 M15 2.8 L17 2.2" stroke="#e0e0e0" stroke-width="1"/>
 <rect x="1.5" y="2.5" width="4.5" height="4" fill="#b8c4c4"/>
</svg>
<div class="t" style="left:720px;top:337px;font-size:12px;color:#d4d4d4">obj</div>
<svg style="left:743px;top:331px" width="12" height="24" viewBox="0 0 12 24"><path d="M1 0 L7.5 12 L1 24" fill="none" stroke="#111" stroke-width="1.6"/></svg>
<svg style="left:756px;top:335px" width="19" height="19" viewBox="0 0 19 19">
 <defs><linearGradient id="ipg" x1="0" y1="0" x2="0" y2="1"><stop offset="0" stop-color="#b0c8e0"/><stop offset="1" stop-color="#6a90b8"/></linearGradient></defs>
 <path d="M1 3 L5.5 1.5 L5.5 15.5 L1 14Z" fill="url(#ipg)"/>
 <path d="M6.5 0.5 H12.5 V14.5 H6.5Z" fill="url(#ipg)"/>
 <path d="M13.5 1.5 L18 3 L18 14 L13.5 15.5Z" fill="url(#ipg)"/>
 <circle cx="3" cy="9" r="1.8" fill="#c87088" opacity=".7"/><circle cx="9.5" cy="5" r="2" fill="#c87088" opacity=".7"/><circle cx="16" cy="9" r="1.8" fill="#c87088" opacity=".7"/>
 <circle cx="9.5" cy="13" r="4.3" fill="url(#rd)"/>
</svg>
<div class="t" style="left:778px;top:337px;font-size:12px;color:#d4d4d4">instance1</div>
<svg style="left:1233px;top:334px" width="18" height="16" viewBox="0 0 18 16">
 <defs><linearGradient id="png" x1="0" y1="0" x2="1" y2="0"><stop offset="0" stop-color="#f0f0ec"/><stop offset="1" stop-color="#a8a8a4"/></linearGradient></defs>
 <path d="M1 6.2 L8 5.3 L8 7.1Z" fill="#9a9a9a"/>
 <path d="M7.8 0.8 L9.2 1.2 Q10.5 4.5 14.3 4.5 V8 Q10.5 8 9.2 11.3 L7.8 11.7Z" fill="url(#png)" stroke="#1a1a1a" stroke-width=".5"/>
 <rect x="14.3" y="2" width="2.4" height="8.2" fill="#e0e0dc" stroke="#1a1a1a" stroke-width=".5"/>
 <path d="M1 13.5 H16" stroke="#555" stroke-width="1" opacity=".5"/>
</svg>
<svg style="left:1257px;top:333px" width="18" height="18" viewBox="0 0 18 18">
 <circle cx="9" cy="8.8" r="7.8" fill="none" stroke="#7594c4" stroke-width="1.5"/>
 <circle cx="9" cy="8.8" r="4.8" fill="none" stroke="#7594c4" stroke-width="1.3"/>
 <circle cx="9" cy="8.8" r="2" fill="#4f86cc"/>
</svg>
<div class="a" style="left:638px;top:359px;width:641px;height:1px;background:#0a0a0a"></div>
<!-- header -->
<div class="a" style="left:638px;top:360px;width:641px;height:406px;background:#3a3a3a"></div>
<svg style="left:643px;top:364px" width="22" height="23" viewBox="0 0 22 23">
 <g transform="translate(1,1) scale(0.64)">
  <path d="M5 7 Q5 1 11 1 Q16 2 16.5 8 L15.5 13 L7 15.5 Q4 12 5 7Z" fill="#e2c41e"/>
  <path d="M6 9 L9 7 L12 9 L13 12 L9 14 L6 12Z" fill="#d8d8c8" opacity=".8"/>
  <path d="M0.5 17.5 Q2 14.5 9 14 Q14 12.5 17 8.5 Q22 3 26 6 Q28 10 24.5 14.5 Q18 19.5 10 20 Q2 20.5 0.5 17.5Z" fill="#d8b818"/>
  <path d="M9 17.5 Q13 13 20 13 Q18 17 9 17.5Z" fill="#000"/>
  <rect x="16.8" y="15.5" width="10" height="6.2" fill="#e6e6dc"/>
  <path d="M18.5 21.7 L14.5 27.5 L22.5 21.7Z" fill="#e6e6dc"/>
 </g>
 <path d="M13 17 H20 L16.5 21Z" fill="#999"/>
</svg>
<div class="t" style="left:665px;top:367px;font-size:13px;font-weight:bold;color:#d2d2d2">Attribute Wrangle</div>
<div class="a" style="left:777px;top:365.5px;width:404px;height:20px;background:#111;border:1px solid #2c2c2c"></div>
<div class="t mono" style="left:781px;top:371px;font-size:10.5px;color:#f0f0f0">pointwrangle1</div>
<svg style="left:1184px;top:365px" width="20" height="21" viewBox="0 0 20 21">
 <g transform="translate(8.5,8.3)" fill="#e4e4dc"><circle r="4.4"/><rect x="-1.45" y="-7.6" width="2.9" height="4.6" rx="1.45" transform="rotate(22)"/><rect x="-1.45" y="-7.6" width="2.9" height="4.6" rx="1.45" transform="rotate(67)"/><rect x="-1.45" y="-7.6" width="2.9" height="4.6" rx="1.45" transform="rotate(112)"/><rect x="-1.45" y="-7.6" width="2.9" height="4.6" rx="1.45" transform="rotate(157)"/><rect x="-1.45" y="-7.6" width="2.9" height="4.6" rx="1.45" transform="rotate(202)"/><rect x="-1.45" y="-7.6" width="2.9" height="4.6" rx="1.45" transform="rotate(247)"/><rect x="-1.45" y="-7.6" width="2.9" height="4.6" rx="1.45" transform="rotate(292)"/><rect x="-1.45" y="-7.6" width="2.9" height="4.6" rx="1.45" transform="rotate(337)"/><circle r="2" fill="#3a3a3a"/></g>
 <path d="M12 15.5 H19.5 L15.75 20Z" fill="#888"/>
</svg>
<svg style="left:1209px;top:365px" width="20" height="21" viewBox="0 0 20 21">
 <text x="1" y="14" font-family="Liberation Sans" font-weight="bold" font-style="italic" font-size="15" fill="#13306a" stroke="#d8e0f0" stroke-width=".8">H</text>
 <path d="M12 15.5 H19.5 L15.75 20Z" fill="#888"/>
</svg>
<svg style="left:1233px;top:366px" width="16" height="16" viewBox="0 0 16 16">
 <circle cx="8" cy="8" r="6.8" fill="#2a3238" stroke="#e8e8e8" stroke-width="1.3"/>
 <text x="8" y="12" font-family="Liberation Serif" font-weight="bold" font-style="italic" font-size="11" fill="#eee" text-anchor="middle">i</text>
</svg>
<svg style="left:1257px;top:366px" width="16" height="16" viewBox="0 0 16 16">
 <circle cx="8" cy="8" r="6.8" fill="#2a3238" stroke="#e8e8e8" stroke-width="1.3"/>
 <text x="8" y="12" font-family="Liberation Sans" font-weight="bold" font-size="11" fill="#eee" text-anchor="middle">?</text>
</svg>
<div class="a" style="left:640px;top:386px;width:637px;height:1px;background:#000"></div>
<!-- tabs -->
<div class="a" style="left:640px;top:390px;width:43px;height:19px;background:linear-gradient(#4c4c4c,#3e3e3e);border:1px solid #080808;border-bottom:none"></div>
<div class="a" style="left:682px;top:390px;width:62px;height:19px;background:linear-gradient(#474747,#363636);border:1px solid #000"></div>
<div class="t" style="left:647px;top:394.5px;font-size:11.5px;color:#d0d0d0">Code</div>
<div class="t" style="left:690.5px;top:394.5px;font-size:11.5px;color:#d0d0d0">Bindings</div>
<!-- content panel -->
<div class="a" style="left:640px;top:409px;width:637px;height:325px;background:#3b3b3b;border-left:1px solid #080808;border-right:1px solid #0a0a0a;border-bottom:1px solid #0a0a0a"></div>
<div class="a" style="left:641px;top:409px;width:635px;height:1px;background:#505050"></div>
<div class="lbl" style="left:700px;top:421px;width:68px">Group</div>
<div class="a" style="left:783px;top:416px;width:443px;height:21px;background:#131313;border:1px solid #2c2c2c"></div>
<div class="a" style="left:1228px;top:416px;width:18px;height:19px;background:linear-gradient(#4a4a4a,#2f2f2f);border:1px solid #1a1a1a;border-radius:1px"></div>
<div class="tri" style="left:1233px;top:423px;border-top-color:#999;border-left-width:4px;border-right-width:4px;border-top-width:5px"></div>
<svg style="left:1253px;top:418px" width="14" height="15" viewBox="0 0 14 15"><path d="M1.5 1 L12.5 8 L7 8.5 L2 14Z" fill="#d8d8d8"/></svg>

<div class="lbl" style="left:690px;top:446.8px;width:78px">Group Type</div>
<div class="a" style="left:783px;top:441px;width:146px;height:21px;background:linear-gradient(#4c4c4c,#3a3a3a);border:1px solid #1c1c1c;border-radius:2px"></div>
<div class="a" style="left:906px;top:442px;width:22px;height:19px;background:linear-gradient(#3e3e3e,#2c2c2c)"></div>
<svg style="left:913px;top:443px" width="9" height="17" viewBox="0 0 9 17"><path d="M1 6.5 L4.5 1.5 L8 6.5Z M1 10.5 L4.5 15.5 L8 10.5Z" fill="#8a8a8a"/></svg>
<div class="t" style="left:794px;top:446.3px;font-size:11.7px;color:#d0d0d0">Guess from Group</div>

<div class="lbl" style="left:690px;top:472.8px;width:78px">Run Over</div>
<div class="a" style="left:783px;top:467px;width:144px;height:21px;background:linear-gradient(#4c4c4c,#3a3a3a);border:1px solid #1c1c1c;border-radius:2px"></div>
<div class="a" style="left:904px;top:468px;width:22px;height:19px;background:linear-gradient(#3e3e3e,#2c2c2c)"></div>
<svg style="left:911px;top:469px" width="9" height="17" viewBox="0 0 9 17"><path d="M1 6.5 L4.5 1.5 L8 6.5Z M1 10.5 L4.5 15.5 L8 10.5Z" fill="#8a8a8a"/></svg>
<div class="t" style="left:795px;top:472.3px;font-size:11.3px;font-weight:bold;color:#d4d4d4">Detail (only once)</div>

<div class="lbl" style="left:690px;top:580.5px;width:78px">VEXpression</div>
<div class="a" style="left:783px;top:492px;width:444px;height:147px;background:#2a2a2a"></div>
<div class="a" style="left:784px;top:493px;width:428px;height:145px;background:#131313"></div>
<div class="a" style="left:1212px;top:493px;width:14px;height:108px;background:#363636;border:1px solid #2a2a2a;box-shadow:inset 2px 0 0 #303030"></div>
<svg style="left:1214px;top:541px" width="10" height="12" viewBox="0 0 10 12"><g fill="#111"><rect x="1" y="1" width="1.5" height="1.5"/><rect x="4" y="1" width="1.5" height="1.5"/><rect x="7" y="1" width="1.5" height="1.5"/><rect x="1" y="4" width="1.5" height="1.5"/><rect x="4" y="4" width="1.5" height="1.5"/><rect x="7" y="4" width="1.5" height="1.5"/><rect x="1" y="7" width="1.5" height="1.5"/><rect x="4" y="7" width="1.5" height="1.5"/><rect x="7" y="7" width="1.5" height="1.5"/><rect x="1" y="10" width="1.5" height="1.5"/><rect x="4" y="10" width="1.5" height="1.5"/><rect x="7" y="10" width="1.5" height="1.5"/></g></svg>
<div class="a" style="left:1212px;top:602px;width:14px;height:17px;background:#383838;border:1px solid #303030"></div>
<div class="a" style="left:1212px;top:620px;width:14px;height:17px;background:#383838;border:1px solid #303030"></div>
<svg style="left:1214px;top:605px" width="10" height="30" viewBox="0 0 10 30"><path d="M1.5 8.5 L5 3 L8.5 8.5Z M1.5 19 L5 24.5 L8.5 19Z" fill="#505050"/></svg>
<div class="a" style="left:784px;top:640px;width:391px;height:12px;background:#383838;border:1px solid #2e2e2e"></div>
<svg style="left:975px;top:642px" width="12" height="8" viewBox="0 0 12 8"><g fill="#111"><rect x="1" y="1" width="1.5" height="1.5"/><rect x="4" y="1" width="1.5" height="1.5"/><rect x="7" y="1" width="1.5" height="1.5"/><rect x="10" y="1" width="1.5" height="1.5"/><rect x="1" y="4" width="1.5" height="1.5"/><rect x="4" y="4" width="1.5" height="1.5"/><rect x="7" y="4" width="1.5" height="1.5"/><rect x="10" y="4" width="1.5" height="1.5"/></g></svg>
<div class="a" style="left:1176px;top:640px;width:17px;height:12px;background:#383838;border:1px solid #303030"></div>
<div class="a" style="left:1194px;top:640px;width:17px;height:12px;background:#383838;border:1px solid #303030"></div>
<svg style="left:1176px;top:641px" width="36" height="10" viewBox="0 0 36 10"><path d="M11 1.5 L5.5 5 L11 8.5Z M24 1.5 L29.5 5 L24 8.5Z" fill="#505050"/></svg>
<div class="a" style="left:1228px;top:492px;width:18px;height:20px;background:linear-gradient(#4a4a4a,#2f2f2f);border:1px solid #1a1a1a;border-radius:1px"></div>
<div class="tri" style="left:1233px;top:499px;border-top-color:#999;border-left-width:4px;border-right-width:4px;border-top-width:5px"></div>
<svg style="left:1251px;top:496px" width="18" height="17" viewBox="0 0 18 17">
 <path d="M6.5 1 V9" stroke="#e0e0e0" stroke-width="2"/>
 <rect x="2" y="3.5" width="3" height="2" fill="#ddd"/><rect x="8" y="5" width="7" height="2" fill="#ddd"/>
 <path d="M12.5 9.5 V15.5 M9.5 12.5 H15.5" stroke="#eee" stroke-width="2"/>
</svg>
<pre class="a mono" style="left:788.2px;top:495.3px;font-size:10.65px;line-height:13px;font-weight:bold;color:#e8e8e8"><span style="color:#e070e0">int</span> pts[];
<span style="color:#e070e0">float</span> x,y;

<span style="color:#e070e0">for</span> (<span style="color:#e070e0">int</span> i = 0; i &lt; <span style="color:#5cc8c8">chi</span>(<span style="color:#78d050">"total"</span>); i++)
{
    x = 12 * <span style="color:#5cc8c8">cos</span>(<span style="color:#5cc8c8">radians</span>(360/<span style="color:#5cc8c8">ch</span>(<span style="color:#78d050">"total"</span>) * i));
    y = 12 * <span style="color:#5cc8c8">sin</span>(<span style="color:#5cc8c8">radians</span>(360/<span style="color:#5cc8c8">ch</span>(<span style="color:#78d050">"total"</span>) * i));
    v@loc = <span style="color:#5cc8c8">set</span>(x,y,0);
    pts[i] = <span style="color:#5cc8c8">addpoint</span>(<span style="color:#5cc8c8">geoself</span>(),v@loc);
}</pre>
<div class="a" style="left:786px;top:611px;width:8px;height:14px;border:1px dotted #40c040"></div>

<div class="a" style="left:783.5px;top:659.5px;width:443px;height:21px;background:#3e3e3e;border:2px solid #c4c4c4;border-top-color:#a8a8a8"></div>
<div class="a" style="left:1120px;top:661px;width:2px;height:18px;background:#a8a8a8"></div>
<div class="t" style="left:1144px;top:666px;font-size:11.5px;color:#d0d0d0">Ln 5, Col 2</div>

<div class="lbl" style="left:640px;top:688px;width:128px;font-size:12.2px">Attributes to Create</div>
<div class="a" style="left:783.5px;top:683.5px;width:488px;height:20px;background:#131313;border:1px solid #2c2c2c"></div>
<div class="t mono" style="left:787px;top:689px;font-size:11px;color:#e8e8e8">*</div>
<div class="a" style="left:784px;top:708px;width:13.5px;height:13.5px;background:#1a1a1a;border:1px solid #2c2c2c"></div>
<div class="t" style="left:804.5px;top:707.8px;font-size:11.7px;color:#cdcdcd">Enforce Prototypes</div>

<!-- total row -->
<div class="lbl" style="left:700px;top:742px;width:62px">Total</div>
<div class="a" style="left:777px;top:736px;width:90px;height:22px;background:#131313;border:1px solid #2a2a2a"></div>
<div class="t" style="left:781.8px;top:741.6px;font-size:12.5px;font-weight:bold;letter-spacing:-.3px;color:#f0f0f0">36</div>
<div class="a" style="left:872px;top:743.5px;width:400px;height:6px;background:#0b3a78;border:1px solid #050505;box-shadow:inset 0 1px 0 #3a6ab0"></div>
<div class="a" style="left:1270px;top:736px;width:7px;height:21px;background:linear-gradient(90deg,#6a6a6a,#4a4a4a);border:1px solid #050505;border-radius:1px"></div>
<svg style="left:1271px;top:743px" width="6" height="7" viewBox="0 0 6 7"><path d="M0.5 0.5 L5.5 3.5 L0.5 6.5Z" fill="#000"/></svg>
<!-- right strip -->
<div class="a" style="left:1279px;top:0;width:1px;height:766px;background:#1a1a1a"></div>
<div class="a" style="left:1280px;top:0;width:3px;height:766px;background:#cfcfcf"></div>
<div class="a" style="left:1281px;top:0;width:2px;height:159px;background:#140c06"></div>
</body></html>
